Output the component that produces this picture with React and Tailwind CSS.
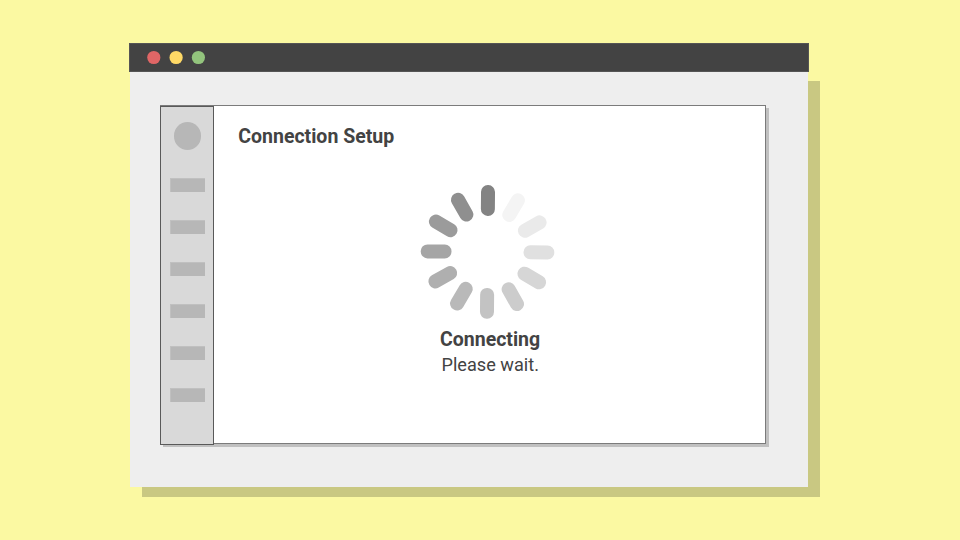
const SPOKES = [
  '#838383', '#f4f4f4', '#eaeaea', '#e0e0e0', '#d6d6d6', '#cccccc',
  '#c3c3c3', '#b9b9b9', '#afafaf', '#a5a5a5', '#9b9b9b', '#8f8f8f',
];

function TitleBar() {
  return (
    <div className="relative -mx-px flex h-[29px] items-center border border-[#555] bg-[#434343] pl-4">
      <svg className="h-4 w-16" viewBox="0 0 64 16">
        <circle cx="7.8" cy="7.5" r="6.6" fill="#e06666" />
        <circle cx="30.1" cy="7.5" r="6.6" fill="#ffd966" />
        <circle cx="52.4" cy="7.5" r="6.6" fill="#93c47d" />
      </svg>
    </div>
  );
}

function Sidebar() {
  return (
    <aside className="-mb-[2px] -ml-px flex w-[54px] flex-col items-center border border-[#595959] bg-[#d9d9d9] pt-[15.3px]">
      <div className="ml-[0.6px] size-[27.5px] shrink-0 rounded-full bg-[#b7b7b7]" />
      <nav className="mt-[28.2px] flex flex-col gap-7">
        {Array.from({ length: 6 }, (_, i) => (
          <div key={i} className="h-3.5 w-[35px] border-l border-t border-[#c0c0c0] bg-[#b7b7b7]" />
        ))}
      </nav>
    </aside>
  );
}

function Spinner() {
  return (
    <svg className="size-[140px]" viewBox="-70 -70 140 140">
      {SPOKES.map((color, i) => (
        <rect key={color} x="-7" y="-66.8" width="14" height="30.8" rx="6.8" fill={color} transform={`translate(0.5 -0.1) rotate(${i * 30 + 0.5})`} />
      ))}
    </svg>
  );
}

export default function App() {
  return (
    <div className="h-[540px] w-[960px] overflow-hidden bg-[#fbf9a2] pl-[130px] pt-[43px] font-['Roboto',sans-serif] text-[#434343]">
      <div className="w-[678px]">
        <TitleBar />
        <div className="-mt-px h-[416px] bg-[#eeeeee] pl-[30px] pt-[34px] shadow-[12px_10px_0_0_#c9c882]">
          <div className="flex h-[339px] w-[606px] border border-[#7b7b7b] bg-white shadow-[3px_3px_0_0_#c0c0c0]">
            <Sidebar />
            <main className="flex-1 pt-[18.5px]">
              <h1 className="ml-[24.3px] text-[19.5px] leading-6 font-bold whitespace-nowrap">Connection Setup</h1>
              <div className="ml-[203.3px] mt-[33.2px] flex w-[140px] flex-col items-center">
                <Spinner />
                <p className="mt-[6px] ml-[5.6px] text-[19.5px] leading-6 font-bold">Connecting</p>
                <p className="mt-px ml-[5.8px] text-[18.15px] leading-6">Please wait.</p>
              </div>
            </main>
          </div>
        </div>
      </div>
    </div>
  );
}
